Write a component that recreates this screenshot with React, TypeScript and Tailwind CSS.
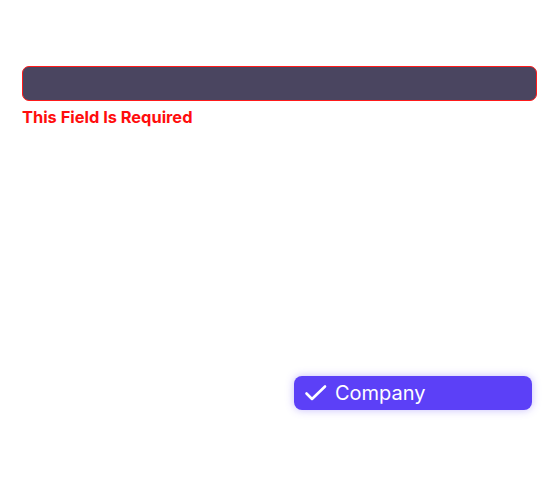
import React from "react";

export default function App() {
  return (
    <div className="w-[560px] h-[483px] bg-white" style={{ fontFamily: "Inter, 'Noto Sans', sans-serif" }}>
      <div className="flex flex-col pt-[66px] pl-[22px] pr-[23px]">
        <div className="h-[35px] w-full rounded-[7px] border-[1.5px] border-[#ff1a1a] bg-[#4a4560]" />
        <div className="mt-[6px] text-[16.4px] leading-[20px] font-bold text-[#ff0d0d]">This Field Is Required</div>
        <div className="mt-[249px] ml-auto mr-[5px] flex h-[34px] w-[238px] items-center gap-[7px] rounded-[8px] bg-[#5c40f7] pl-[9px] text-white shadow-[0_0_8px_rgba(92,64,247,0.35)]">
          <svg width="25" height="24" viewBox="0 0 25 24" fill="none" stroke="white" strokeWidth="2.6" strokeLinecap="round" strokeLinejoin="round">
            <path d="M3.5 12.5l5.5 5.5L22 5.5" />
          </svg>
          <span className="text-[20px] leading-[24px]">Company</span>
        </div>
      </div>
    </div>
  );
}
